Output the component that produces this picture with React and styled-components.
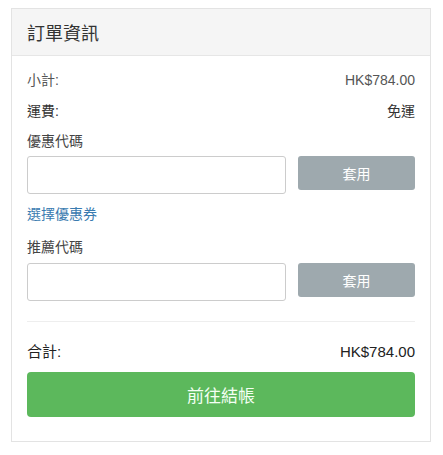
import React from "react";
import styled, { createGlobalStyle } from "styled-components";

const Global = createGlobalStyle`
  html, body { margin: 0; padding: 0; background: #fff; }
  body {
    font-family: "Liberation Sans", "Noto Sans CJK TC", sans-serif;
    color: #333;
  }
  * { box-sizing: border-box; }
`;

const Page = styled.div`
  padding: 8px 12px 0 11px;
`;

const Panel = styled.div`
  border: 1px solid #e3e3e3;
  background: #fff;
`;

const Header = styled.div`
  background: #f5f5f5;
  border-bottom: 1px solid #e6e6e6;
  height: 47px;
  display: flex;
  align-items: center;
  padding: 0 15px;
  font-size: 18px;
  color: #333;
`;

const Body = styled.div`
  padding: 14px 15px 24px;
  display: flex;
  flex-direction: column;
`;

const Row = styled.div`
  display: flex;
  justify-content: space-between;
  align-items: center;
  font-size: ${(p) => p.$size || 14}px;
  line-height: 20px;
  color: ${(p) => p.$color || "#333"};
  margin-bottom: ${(p) => p.$mb || 0}px;
`;

const Label = styled.div`
  font-size: 14px;
  line-height: 20px;
  color: #444;
  margin-bottom: ${(p) => p.$mb || 5}px;
`;

const CodeRow = styled.div`
  display: grid;
  grid-template-columns: 1fr 117px;
  column-gap: 12px;
  align-items: start;
`;

const Input = styled.input`
  height: 38px;
  border: 1px solid #ccc;
  border-radius: 3px;
  padding: 6px 10px;
  font-size: 14px;
  width: 100%;
  outline: none;
`;

const GreyButton = styled.button`
  height: 34px;
  border: none;
  border-radius: 3px;
  background: #9ea9ae;
  color: #fff;
  font-size: 14px;
  font-family: inherit;
`;

const Link = styled.a`
  font-size: 14px;
  line-height: 20px;
  color: #3a7bb0;
  text-decoration: none;
  margin-top: 10px;
  margin-bottom: 13px;
`;

const Divider = styled.hr`
  border: none;
  border-top: 1px solid #eee;
  margin: 20px 0 20px;
  width: 100%;
`;

const CheckoutButton = styled.button`
  height: 45px;
  border: none;
  border-radius: 4px;
  background: #5cb85c;
  color: #f4fff4;
  font-size: 17px;
  font-family: inherit;
  margin-top: 10px;
  width: 100%;
`;

export default function App() {
  return (
    <>
      <Global />
      <Page>
        <Panel>
          <Header>訂單資訊</Header>
          <Body>
            <Row $color="#555" $mb={11}>
              <span>小計:</span>
              <span>HK$784.00</span>
            </Row>
            <Row $color="#333" $mb={10}>
              <span>運費:</span>
              <span>免運</span>
            </Row>
            <Label>優惠代碼</Label>
            <CodeRow>
              <Input />
              <GreyButton>套用</GreyButton>
            </CodeRow>
            <Link href="#">選擇優惠券</Link>
            <Label $mb={6}>推薦代碼</Label>
            <CodeRow>
              <Input />
              <GreyButton>套用</GreyButton>
            </CodeRow>
            <Divider />
            <Row $color="#222" $size={15}>
              <span>合計:</span>
              <span>HK$784.00</span>
            </Row>
            <CheckoutButton>前往結帳</CheckoutButton>
          </Body>
        </Panel>
      </Page>
    </>
  );
}
